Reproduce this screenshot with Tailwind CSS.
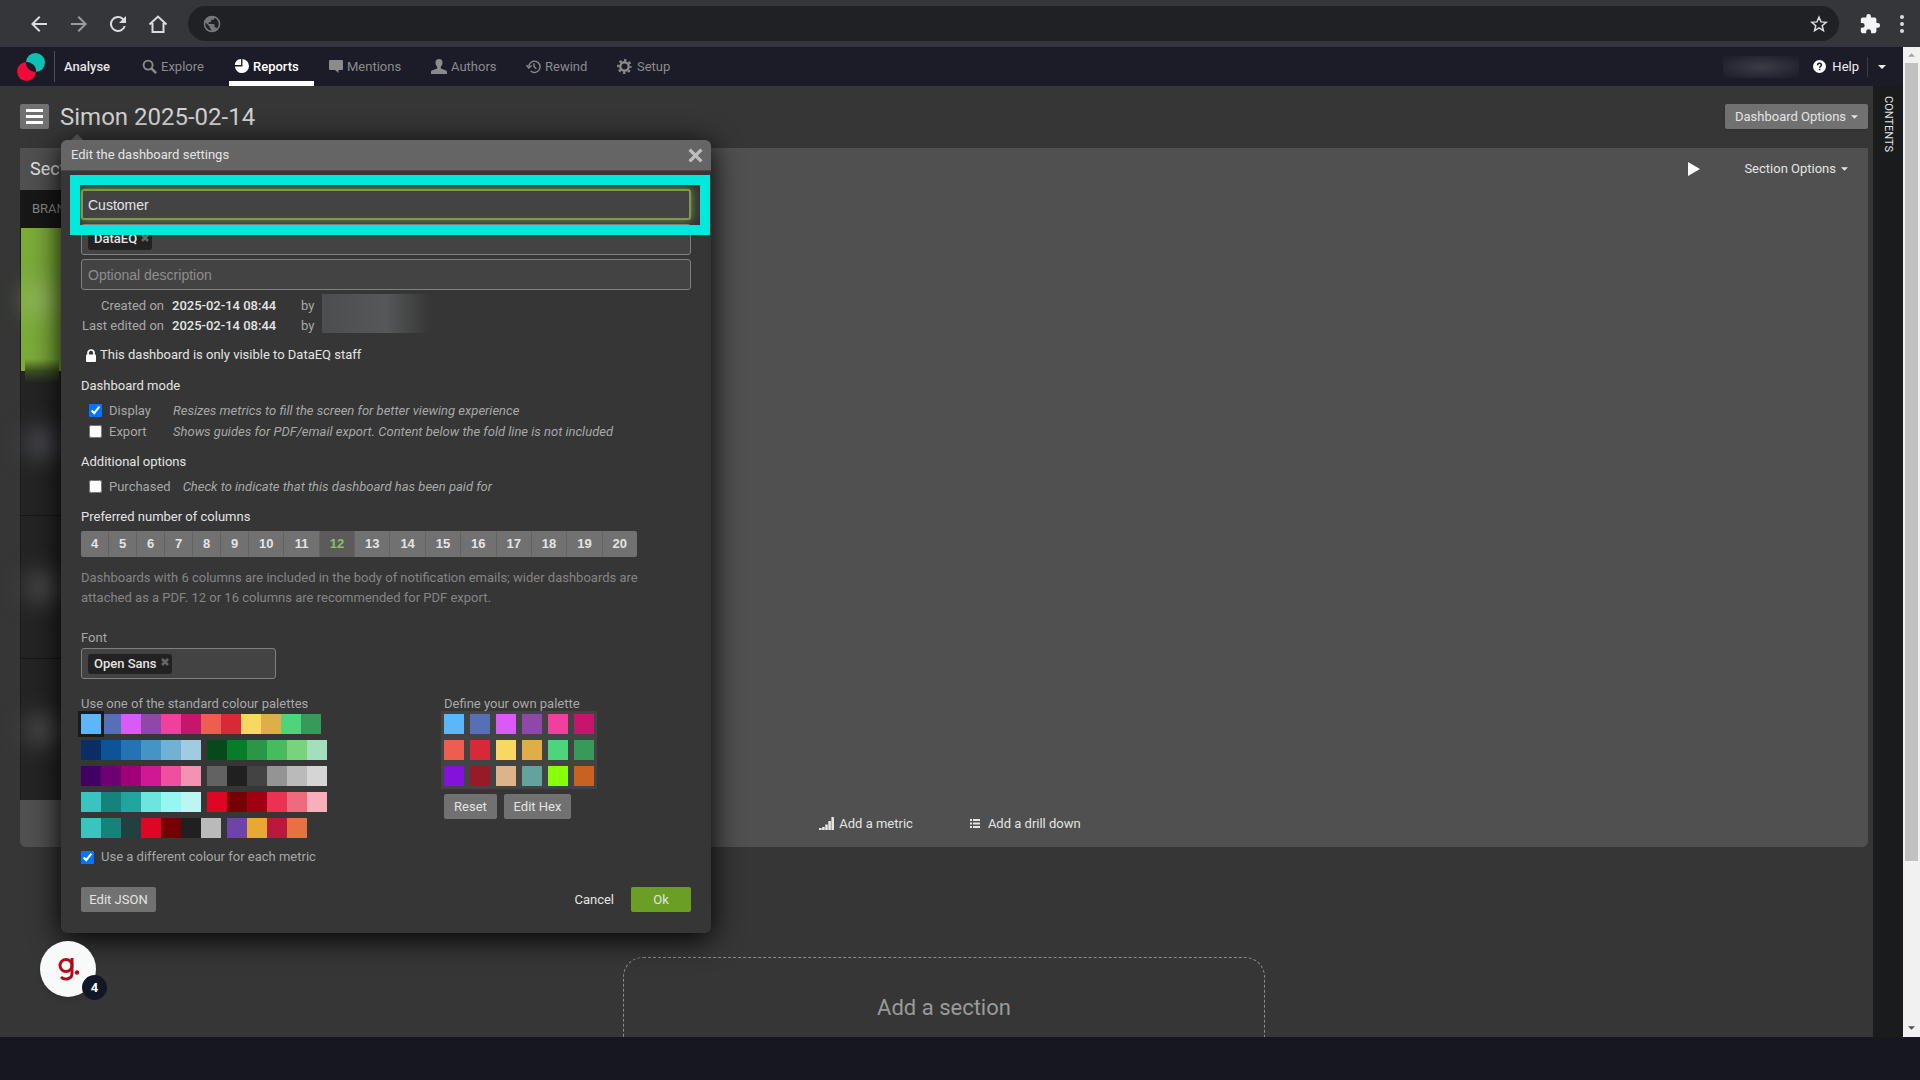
<!DOCTYPE html>
<html lang="en">
<head>
  <meta charset="UTF-8">
  <title>Simon 2025-02-14 - Analyse</title>
  <script src="https://cdn.jsdelivr.net/npm/@tailwindcss/browser@4"></script>
</head>
<body class="h-screen flex flex-col overflow-hidden bg-[#353635] font-[Roboto,'Liberation_Sans',sans-serif] text-[13px] leading-5 text-[#e4e4e4]">

  <!-- Browser toolbar -->
  <header class="h-[47px] shrink-0 flex items-center bg-[#35363a] pl-[27px] pr-2">
    <div class="flex items-center gap-4 text-[#dadce0]">
      <button aria-label="Back"><svg class="size-6" viewBox="0 0 24 24" fill="currentColor"><path d="M20 11H7.800l5.600-5.600L12 4l-8 8 8 8 1.400-1.400L7.800 13H20z"/></svg></button>
      <button aria-label="Forward" class="text-[#9a9b9e]"><svg class="size-6" viewBox="0 0 24 24" fill="currentColor"><path d="M4 11h12.200l-5.600-5.600L12 4l8 8-8 8-1.400-1.400 5.600-5.600H4z"/></svg></button>
      <button aria-label="Reload" class="-ml-px"><svg class="size-6" viewBox="0 0 24 24" fill="currentColor"><path d="M17.650 6.350A8 8 0 1 0 19.730 14h-2.080A6 6 0 1 1 12 6c1.660 0 3.140.690 4.220 1.780L13 11h7V4z"/></svg></button>
      <button aria-label="Home"><svg class="size-6" viewBox="0 0 24 24" fill="none" stroke="currentColor" stroke-width="2"><path d="M3.500 12.500 12 4.500l8.500 8M6.500 11v9h11v-9"/></svg></button>
    </div>
    <div class="ml-[18px] flex-1 h-[35px] flex items-center rounded-full bg-[#202124] px-[14px]">
      <svg class="size-5 text-[#75777a]" viewBox="0 0 24 24" fill="currentColor"><path d="M12 2a10 10 0 1 0 0 20 10 10 0 0 0 0-20zm-1 17.930A8 8 0 0 1 4.210 10.210L9 15v1a2 2 0 0 0 2 2zm6.900-2.540A2 2 0 0 0 16 16h-1v-3a1 1 0 0 0-1-1H8v-2h2a1 1 0 0 0 1-1V7h2a2 2 0 0 0 2-2v-.410a8 8 0 0 1 2.900 12.800z"/></svg>
      <input type="text" aria-label="Address" class="flex-1 h-full bg-transparent px-3 outline-none">
      <button aria-label="Bookmark this page" class="-mr-[3px]"><svg class="size-[18px] text-[#dadce0]" viewBox="0 0 24 24" fill="none" stroke="currentColor" stroke-width="2"><path d="m12 3 2.700 6.200 6.800.600-5.200 4.400 1.600 6.600-5.900-3.500-5.900 3.500 1.600-6.600-5.200-4.400 6.800-.600z"/></svg></button>
    </div>
    <button class="ml-5" aria-label="Extensions"><svg class="size-[22px] text-[#f1f3f4]" viewBox="0 0 24 24" fill="currentColor"><path d="M20.500 11H19V7a2 2 0 0 0-2-2h-4V3.500a2.500 2.500 0 0 0-5 0V5H4a2 2 0 0 0-2 2v3.800h1.500a2.700 2.700 0 0 1 0 5.400H2V20c0 1.100.900 2 2 2h3.800v-1.500a2.700 2.700 0 0 1 5.400 0V22H17a2 2 0 0 0 2-2v-4h1.500a2.500 2.500 0 0 0 0-5z"/></svg></button>
    <button class="ml-[19px]" aria-label="Browser menu"><svg class="w-3 h-5 text-[#dadce0]" viewBox="0 0 12 20" fill="currentColor"><circle cx="2" cy="3" r="2"/><circle cx="2" cy="10" r="2"/><circle cx="2" cy="17" r="2"/></svg></button>
  </header>

  <div class="flex-1 min-h-0 flex">
    <div class="flex-1 min-w-0 flex flex-col">

      <!-- App navigation -->
      <nav class="h-[39px] shrink-0 flex items-stretch bg-[#1b1c28] text-[#8b8b8b] pl-4">
        <a href="#" class="flex items-center" aria-label="Home">
          <svg class="w-[30px] h-[30px]" viewBox="0 0 30 30"><circle cx="19.500" cy="10.500" r="9.500" fill="#0fc1b4"/><circle cx="10.500" cy="19.500" r="9.500" fill="#f00b38"/><path d="M10 10a9.500 9.500 0 0 1 10 10 9.500 9.500 0 0 1-10-10z" fill="#1b1c28"/></svg>
        </a>
        <div class="ml-2 my-1 w-px bg-[#4b4c56]"></div>
        <a href="#" class="ml-[9px] w-[74px] flex items-center text-[#e4e4e4] font-medium">Analyse</a>
        <a href="#" class="w-[91px] pl-1 flex items-center gap-1"><svg class="size-[15px]" viewBox="0 0 16 16" fill="none" stroke="currentColor" stroke-width="2"><circle cx="6.500" cy="6.500" r="4.800"/><path d="m10 10 5 5" stroke-width="2.800"/></svg>Explore</a>
        <a href="#" class="w-[85px] pl-[5px] flex items-center gap-1 text-white font-medium border-b-[5px] border-white pt-[5px]"><svg class="size-[15px]" viewBox="0 0 16 16" fill="currentColor"><path d="M9 0v8H1a7.500 7.500 0 1 0 8-8z"/><path d="M7.500 0v6.500H.800A7.300 7.300 0 0 1 7.500 0z"/></svg>Reports</a>
        <a href="#" class="ml-[15px] w-[102px] flex items-center gap-1"><svg class="size-[14px]" viewBox="0 0 14 14" fill="currentColor"><path d="M1 0h12a1 1 0 0 1 1 1v8a1 1 0 0 1-1 1H9.500v3L6 10H1a1 1 0 0 1-1-1V1a1 1 0 0 1 1-1z"/></svg>Mentions</a>
        <a href="#" class="w-[95px] flex items-center gap-1"><svg class="w-4 h-[15px]" viewBox="0 0 16 15" fill="currentColor"><path d="M8 0c2.300 0 3.700 1.600 3.500 4-.100 1.600-.800 3-1.700 3.800v1.700l4.700 1.700c.900.300 1.500 1 1.500 2V15H0v-1.800c0-1 .600-1.700 1.500-2l4.700-1.700V7.800C5.300 7 4.600 5.600 4.500 4 4.300 1.600 5.700 0 8 0z"/></svg>Authors</a>
        <a href="#" class="w-[91px] flex items-center gap-1"><svg class="size-[15px]" viewBox="0 0 16 16" fill="none" stroke="currentColor" stroke-width="1.500"><path d="M3 8a6 6 0 1 1 2 4.800"/><path d="M.500 6.500 3 9.500l3-2.500"/><path d="M8.500 4.500V8l2.500 2.500"/></svg>Rewind</a>
        <a href="#" class="flex items-center gap-[5px]"><svg class="size-[15px]" viewBox="0 0 16 16" fill="none" stroke="currentColor"><circle cx="8" cy="8" r="4.500" stroke-width="2.500"/><circle cx="8" cy="8" r="6.700" stroke-width="2.400" stroke-dasharray="2.600 2.662" stroke-dashoffset="1.300"/></svg>Setup</a>
        <div class="ml-auto flex items-center text-[#f0f0f0]">
          <div class="w-[76px] h-[22px] mr-[14px] bg-radial from-[#3b3c46] to-[#1b1c28]"></div>
          <a href="#" class="flex items-center gap-[6px]"><svg class="size-[13px]" viewBox="0 0 13 13"><circle cx="6.500" cy="6.500" r="6.500" fill="#fff"/><path d="M4.600 5.200c0-2.700 3.800-2.500 3.800-.200 0 1.300-1.800 1.300-1.800 2.700M6.600 8.800v1.400" fill="none" stroke="#1b1c28" stroke-width="1.500"/></svg>Help</a>
          <div class="ml-2 w-px h-5 bg-[#3a3b45]"></div>
          <button class="pl-[10px] pr-[17px]" aria-label="Account menu"><svg class="w-2 h-1" viewBox="0 0 8 4" fill="currentColor"><path d="M0 0h8L4 4z"/></svg></button>
        </div>
      </nav>

      <div class="flex-1 min-h-0 flex">
        <!-- Dashboard -->
        <main class="relative flex-1 min-w-0 overflow-hidden pl-5 pr-[5px] pt-[18px]">
          <div class="flex items-center h-[25px]">
            <button aria-label="Dashboards" class="w-[29px] h-[25px] flex flex-col items-center justify-center gap-[3px] rounded-xs bg-[#717171]">
              <span class="w-[17px] h-[3px] bg-white"></span><span class="w-[17px] h-[3px] bg-white"></span><span class="w-[17px] h-[3px] bg-white"></span>
            </button>
            <h1 class="ml-[11px] text-2xl text-[#d2d2d2]">Simon 2025-02-14</h1>
            <button class="ml-auto w-[143px] h-[25px] flex items-center justify-center gap-[5px] rounded-xs bg-[#717171] shadow-sm">Dashboard Options<svg class="w-[7px] h-1" viewBox="0 0 8 4" fill="currentColor"><path d="M0 0h8L4 4z"/></svg></button>
          </div>

          <section class="mt-[19px] rounded-b-md bg-[#4f504f]">
            <div class="h-[42px] flex items-center pl-[10px] pr-5">
              <h2 class="text-lg">Section</h2>
              <button aria-label="Play" class="ml-auto mr-[44px]"><svg class="w-3 h-[14px]" viewBox="0 0 12 14" fill="#fff"><path d="M0 0l12 7-12 7z"/></svg></button>
              <button class="flex items-center gap-[5px]">Section Options<svg class="w-[7px] h-1" viewBox="0 0 8 4" fill="currentColor"><path d="M0 0h8L4 4z"/></svg></button>
            </div>
            <div class="w-[600px] bg-[#242424] border-l border-[#1a1a1a]">
              <h3 class="h-[38px] flex items-center pl-[11px] bg-[#171717] text-[#8b8b8b]">BRAND</h3>
              <div class="relative h-[143px] flex items-center bg-[#7cab3a]">
                <span class="ml-1 w-8 h-8 rounded-full bg-[#a5c37e]/60 blur-md"></span>
                <span class="absolute left-1 -bottom-3 w-[34px] h-6 bg-linear-to-b from-transparent via-[#3c5020] to-[#242424]"></span>
              </div>
              <div class="h-[145px] flex items-center border-b border-[#171717]"><span class="ml-1 w-9 h-7 rounded-full bg-[#50515a] blur-md"></span></div>
              <div class="h-[143px] flex items-center border-b border-[#171717]"><span class="ml-1 w-9 h-7 rounded-full bg-[#505150] blur-md"></span></div>
              <div class="h-[141px] flex items-center"><span class="ml-1 w-9 h-7 rounded-full bg-[#505150] blur-md"></span></div>
            </div>
            <div class="h-[47px] flex items-center justify-center gap-[57px] pl-3">
              <button class="flex items-center gap-[5px]"><svg class="w-[15px] h-[13px]" viewBox="0 0 15 13" fill="currentColor"><path d="M0 11h2.600v2H0zM3.100 10h2.600v3H3.100zM6.200 7.500h2.600V13H6.200zM9.300 4h2.600v9H9.300zM12.400 0H15v13h-2.600z"/></svg>Add a metric</button>
              <button class="flex items-center gap-2"><svg class="w-[10px] h-[9px]" viewBox="0 0 10 9" fill="currentColor"><path d="M0 0h2v2H0zM3 0h7v2H3zM0 3.500h2v2H0zM3 3.500h7v2H3zM0 7h2v2H0zM3 7h7v2H3z"/></svg>Add a drill down</button>
            </div>
          </section>

          <button class="mt-[110px] mx-auto w-[642px] h-[102px] flex items-center justify-center rounded-[20px] border border-dashed border-[#8b8b8b] text-[22px] text-[#9a9a9a]">Add a section</button>
        </main>

        <aside class="w-[30px] shrink-0 bg-[#1a1b1d] pt-[10px] flex justify-center">
          <button class="h-fit [writing-mode:vertical-rl] text-[11px] leading-4">CONTENTS</button>
        </aside>
      </div>
    </div>

    <!-- Scrollbar -->
    <div class="w-[17px] shrink-0 flex flex-col items-center bg-[#f1f1f1]">
      <svg class="my-[6px] w-[7px] h-1" viewBox="0 0 8 4" fill="#a3a3a3"><path d="M0 4h8L4 0z"/></svg>
      <div class="w-[13px] h-[798px] bg-[#c1c1c1]"></div>
      <svg class="mt-auto mb-[7px] w-[7px] h-1" viewBox="0 0 8 4" fill="#505050"><path d="M0 0h8L4 4z"/></svg>
    </div>
  </div>

  <footer class="h-[43px] shrink-0 bg-[#171722]"></footer>

  <!-- Dashboard settings dialog -->
  <form class="absolute left-[61px] top-[140px] w-[650px] rounded-md bg-[#353635] shadow-[0_5px_30px_#000] text-[#a8a8a8]" onsubmit="return false">
    <div class="absolute left-[10px] -top-[6px] border-x-6 border-b-6 border-x-transparent border-b-[#4a4a4a]"></div>
    <div class="h-[31px] flex items-center justify-between rounded-t-md bg-[#656565] border-b border-[#4a4a4a] pl-[10px] pr-2 text-[#e4e4e4]">
      <h2>Edit the dashboard settings</h2>
      <button type="button" aria-label="Close"><svg class="size-[15px]" viewBox="0 0 14 14" fill="none" stroke="#bdbdbd" stroke-width="3.200"><path d="m1.500 1.500 11 11m0-11-11 11"/></svg></button>
    </div>

    <div class="px-5 pt-[18px] pb-[21px]">
      <div class="relative flex flex-col gap-1 font-['Liberation_Sans',Arial,sans-serif] text-sm">
        <input id="dashName" aria-label="Dashboard name" type="text" value="Customer" class="h-[31px] rounded-[3px] border-2 border-[#7a9a50] bg-[#434343] px-[5px] text-[#e4e4e4] outline-none shadow-[0_0_8px_#7a9a50]">
        <div class="h-[31px] flex items-center rounded-[3px] border border-[#808080] bg-[#434343] px-[6px]">
          <span class="h-5 flex items-center gap-1 rounded-[3px] bg-[#222] pl-[6px] pr-[3px] font-[Roboto,sans-serif] text-[13px] font-medium text-[#e4e4e4]">DataEQ<button type="button" aria-label="Remove DataEQ" class="mb-1"><svg class="size-2" viewBox="0 0 8 8" stroke="#666" stroke-width="2.500"><path d="m1 1 6 6m0-6-6 6"/></svg></button></span>
          <input type="text" aria-label="Brands" class="flex-1 min-w-0 outline-none">
        </div>
        <input aria-label="Description" type="text" placeholder="Optional description" class="h-[31px] rounded-[3px] border border-[#808080] bg-[#434343] px-[6px] placeholder:text-[#8e8e8e] outline-none">
        <!-- Highlight round the name field -->
        <div class="absolute -left-[11px] -top-[14px] w-[640px] h-[60px] border-[10px] border-[#00e9dc] pointer-events-none"></div>
      </div>

      <div class="mt-[6px] flex">
        <dl class="grid grid-cols-[83px_120px] gap-x-[8px]">
          <dt class="text-right">Created on</dt><dd class="font-medium text-[#e4e4e4]">2025-02-14 08:44</dd>
          <dt class="text-right">Last edited on</dt><dd class="font-medium text-[#e4e4e4]">2025-02-14 08:44</dd>
        </dl>
        <div class="ml-[9px] flex flex-col"><span>by</span><span>by</span></div>
        <div class="ml-2 -mt-[2px] h-[39px] w-[108px] bg-linear-to-r from-[#4c4d4e] via-[#565758] via-60% to-[#353635]"></div>
      </div>

      <p class="mt-[9px] pl-[5px] flex items-center gap-1 text-[#e4e4e4]"><svg class="w-[10px] h-[13px]" viewBox="0 0 10 13"><rect y="5.500" width="10" height="7.500" rx="1" fill="#fff"/><path d="M2 6V4a3 3 0 0 1 6 0v2" fill="none" stroke="#fff" stroke-width="1.700"/></svg>This dashboard is only visible to DataEQ staff</p>

      <h3 class="mt-[11px] text-[#e4e4e4]">Dashboard mode</h3>
      <div class="mt-1 pl-2">
        <div class="h-[21px] flex items-center"><input id="modeDisplay" type="checkbox" checked class="size-[13px]"><label for="modeDisplay" class="ml-[7px] w-16">Display</label><em>Resizes metrics to fill the screen for better viewing experience</em></div>
        <div class="h-[21px] flex items-center"><input id="modeExport" type="checkbox" class="size-[13px]"><label for="modeExport" class="ml-[7px] w-16">Export</label><em>Shows guides for PDF/email export. Content below the fold line is not included</em></div>
      </div>

      <h3 class="mt-[10px] text-[#e4e4e4]">Additional options</h3>
      <div class="mt-1 pl-2 h-[21px] flex items-center"><input id="purchased" type="checkbox" class="size-[13px]"><label for="purchased" class="ml-[7px] mr-3">Purchased</label><em>Check to indicate that this dashboard has been paid for</em></div>

      <h3 class="mt-[10px] text-[#e4e4e4]">Preferred number of columns</h3>
      <div id="columns" class="mt-1 h-[26px] w-[556px] flex rounded-xs overflow-hidden bg-[#717171] font-['Liberation_Sans',Arial,sans-serif] font-bold text-[#e4e4e4]"></div>
      <p class="mt-[11px] w-[580px] text-[#858585]">Dashboards with 6 columns are included in the body of notification emails; wider dashboards are attached as a PDF. 12 or 16 columns are recommended for PDF export.</p>

      <label for="font" class="mt-5 block w-fit">Font</label>
      <div class="h-[31px] w-[195px] flex items-center rounded-[3px] border border-[#808080] bg-[#434343] px-[6px]">
        <span class="h-5 flex items-center gap-1 whitespace-nowrap rounded-[3px] bg-[#222] pl-[6px] pr-[3px] font-medium text-[#e4e4e4]">Open Sans<button type="button" aria-label="Remove Open Sans" class="mb-1"><svg class="size-2" viewBox="0 0 8 8" stroke="#666" stroke-width="2.500"><path d="m1 1 6 6m0-6-6 6"/></svg></button></span>
        <input id="font" type="text" class="flex-1 min-w-0 outline-none">
      </div>

      <div class="mt-[15px] flex">
        <div class="w-[363px]">
          <h4>Use one of the standard colour palettes</h4>
          <div id="palettes" class="flex flex-col gap-[6px]"></div>
          <div class="mt-[9px] flex items-center"><input id="different" type="checkbox" checked class="size-[13px]"><label for="different" class="ml-[7px]">Use a different colour for each metric</label></div>
        </div>
        <div>
          <h4>Define your own palette</h4>
          <div id="ownPalette" class="-mt-[3px] -ml-[3px] w-fit grid grid-cols-6 gap-[6px] bg-[#434343] p-[3px]"></div>
          <div class="mt-[5px] flex gap-[7px] text-[#e4e4e4]">
            <button type="button" class="h-[25px] w-[53px] rounded-xs bg-[#717171]">Reset</button>
            <button type="button" class="h-[25px] w-[67px] rounded-xs bg-[#717171]">Edit Hex</button>
          </div>
        </div>
      </div>

      <div class="mt-5 flex items-center text-[#e4e4e4]">
        <button type="button" class="h-[25px] w-[75px] rounded-xs bg-[#717171]">Edit JSON</button>
        <button type="button" class="ml-auto mr-[17px]">Cancel</button>
        <button type="submit" class="h-[25px] w-[60px] rounded-xs bg-[#6a9e25]">Ok</button>
      </div>
    </div>
  </form>

  <!-- Guide launcher -->
  <button aria-label="Open guide" class="absolute left-10 top-[941px] size-14 rounded-full bg-[#f8faf9] shadow-md">
    <svg class="absolute left-[18px] top-4 w-[22px] h-6" viewBox="0 0 22 24" fill="none" stroke="#b00c18" stroke-width="3"><circle cx="8" cy="8.500" r="6"/><path d="M14 1v15.500c0 6-7.500 7-11 3.500"/><circle cx="19" cy="15.500" r="2.200" fill="#b00c18" stroke="none"/></svg>
    <span class="absolute left-[42px] top-[34px] size-[25px] flex items-center justify-center rounded-full bg-[#111727] font-bold text-white">4</span>
  </button>

  <script>
    const standard = ['#5eb6fa', '#5670b8', '#d95af5', '#8f47a9', '#f0409e', '#c5156c', '#ed5d50', '#d82938', '#f8d860', '#e0ae48', '#4cd57b', '#379a58'];
    const palettes = [
      [standard],
      [['#0b2d66', '#0d5397', '#2573b3', '#4694c4', '#70b1d4', '#a1cbe1'], ['#054a18', '#077c2a', '#2a9746', '#48bb5e', '#79d37b', '#a3dfbc']],
      [['#420063', '#6d0073', '#a10078', '#d11894', '#ee509f', '#f293b4'], ['#626262', '#202020', '#434343', '#949494', '#bababa', '#d5d5d5']],
      [['#39c4be', '#15827b', '#22a59e', '#6ee4de', '#96f6f1', '#bcf6f3'], ['#df0525', '#750005', '#9f0012', '#ea3352', '#ee6b7e', '#f8afba']],
      [['#39c4be', '#15827b', '#21403f', '#df0525', '#750005', '#202020', '#bababa'], ['#6e44ab', '#e9a834', '#b9193a', '#e67141']]
    ];
    const own = [...standard, '#8512da', '#991a27', '#dcb38a', '#62a39e', '#88ff0a', '#c86222'];

    // Column count buttons
    document.getElementById('columns').innerHTML = Array.from({ length: 17 }, (_, i) => i + 4).map(n => {
      const width = n < 10 ? 'w-7' : 'flex-1';
      const state = n === 12 ? 'bg-[#5b5b5b] text-[#8cc060]' : '';
      return `<button type="button" class="${width} ${state} border-r border-[#636363] last:border-r-0">${n}</button>`;
    }).join('');

    // Standard palettes, the first colour is the selected one
    document.getElementById('palettes').innerHTML = palettes.map((row, r) =>
      `<div class="flex gap-[6px]">${row.map(group =>
        `<button type="button" aria-label="Palette" class="flex">${group.map((c, i) =>
          `<span class="size-5 ${r === 0 && i === 0 ? 'relative outline-3 outline-[#1a1a1a]' : ''}" style="background:${c}"></span>`).join('')}</button>`).join('')}</div>`).join('');

    document.getElementById('ownPalette').innerHTML = own.map(c =>
      `<button type="button" aria-label="${c}" class="size-5" style="background:${c}"></button>`).join('');
  </script>
</body>
</html>
